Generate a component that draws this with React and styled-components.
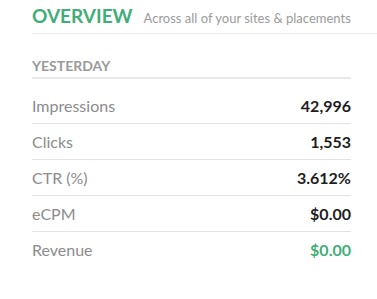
import React from 'react';
import styled, { createGlobalStyle } from 'styled-components';

const GlobalStyle = createGlobalStyle`
  html, body {
    margin: 0;
    padding: 0;
    background: #fff;
  }
  body {
    font-family: Lato, "Open Sans", "Liberation Sans", sans-serif;
  }
`;

const stats = [
  { label: 'Impressions', value: '42,996' },
  { label: 'Clicks', value: '1,553' },
  { label: 'CTR (%)', value: '3.612%' },
  { label: 'eCPM', value: '$0.00' },
  { label: 'Revenue', value: '$0.00', highlight: true },
];

const App = () => {
  return (
    <Page>
      <GlobalStyle />
      <Header>
        <Title>OVERVIEW</Title>
        <Subtitle>Across all of your sites &amp; placements</Subtitle>
      </Header>
      <Panel>
        <SectionTitle>YESTERDAY</SectionTitle>
        <StatList>
          {stats.map((s) => (
            <StatRow key={s.label}>
              <Label>{s.label}</Label>
              <Value $highlight={s.highlight}>{s.value}</Value>
            </StatRow>
          ))}
        </StatList>
      </Panel>
    </Page>
  );
};

const Page = styled.div`
  padding: 4px 0 0 32px;
  width: 345px;
`;

const Header = styled.div`
  display: flex;
  align-items: baseline;
  gap: 11px;
  height: 29px;
  border-bottom: 1px solid #ececec;
`;

const Title = styled.h1`
  margin: 0;
  font-size: 19px;
  line-height: 24px;
  font-weight: 700;
  color: #3fae78;
`;

const Subtitle = styled.span`
  font-size: 13px;
  color: #9b9b9b;
`;

const Panel = styled.div`
  width: 319px;
  margin-top: 23px;
`;

const SectionTitle = styled.h2`
  margin: 0;
  font-size: 14px;
  line-height: 17px;
  font-weight: 700;
  color: #9a9a9a;
  padding-bottom: 3px;
  border-bottom: 2px solid #e8e8e8;
`;

const StatList = styled.div`
  margin-top: 9px;
`;

const StatRow = styled.div`
  display: flex;
  justify-content: space-between;
  align-items: center;
  height: 35px;
  border-bottom: 1px solid #e2e2e2;

  &:last-child {
    border-bottom: none;
  }
`;

const Label = styled.span`
  font-size: 16px;
  color: #8c8c8c;
`;

const Value = styled.span`
  font-size: 16px;
  font-weight: 700;
  color: ${(p) => (p.$highlight ? '#3fae78' : '#1e1e1e')};
`;

export default App;
